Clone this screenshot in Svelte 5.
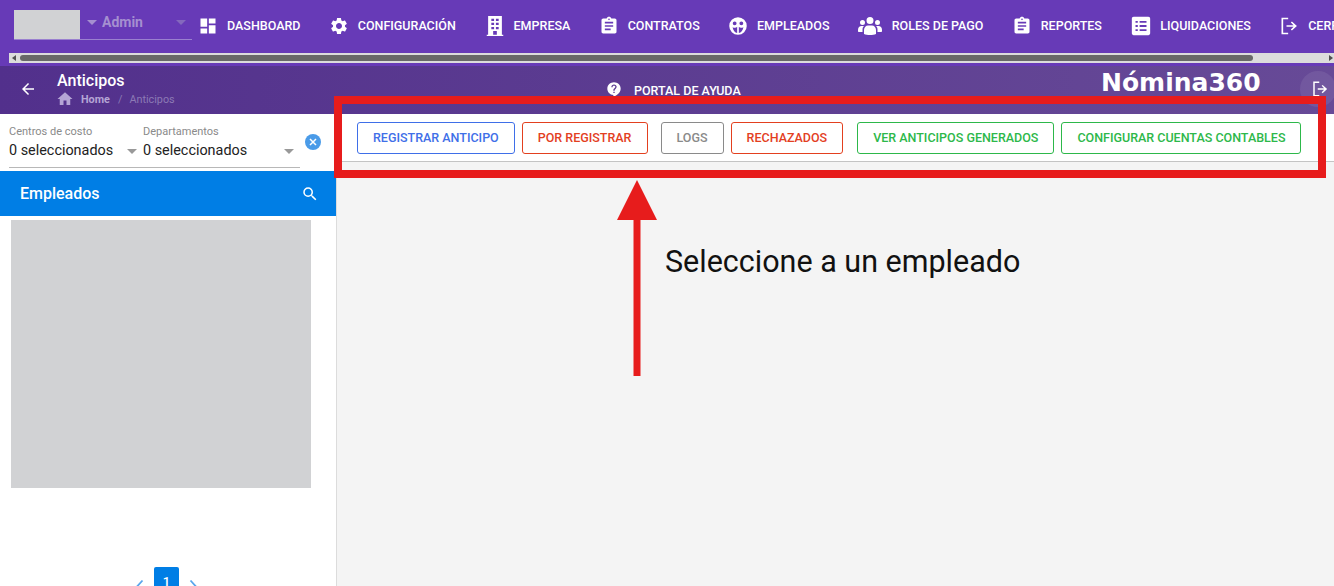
<script>
	const nav = [
		{ icon: 'dashboard', label: 'Dashboard' },
		{ icon: 'cog', label: 'Configuración' },
		{ icon: 'building', label: 'Empresa' },
		{ icon: 'clipboard', label: 'Contratos' },
		{ icon: 'face', label: 'Empleados' },
		{ icon: 'users', label: 'Roles de pago' },
		{ icon: 'clipboard', label: 'Reportes' },
		{ icon: 'list', label: 'Liquidaciones' },
		{ icon: 'exit', label: 'Cerrar sesión' }
	];

	const paths = {
		dashboard: 'M3 13h8V3H3v10zm0 8h8v-6H3v6zm10 0h8V11h-8v10zm0-18v6h8V3h-8z',
		cog: 'M19.14 12.94c.04-.3.06-.61.06-.94 0-.32-.02-.64-.07-.94l2.03-1.58c.18-.14.23-.41.12-.61l-1.92-3.32c-.12-.22-.37-.29-.59-.22l-2.39.96c-.5-.38-1.03-.7-1.62-.94l-.36-2.54c-.04-.24-.24-.41-.48-.41h-3.84c-.24 0-.43.17-.47.41l-.36 2.54c-.59.24-1.13.57-1.62.94l-2.39-.96c-.22-.08-.47 0-.59.22L2.74 8.87c-.12.21-.08.47.12.61l2.03 1.58c-.05.3-.09.63-.09.94s.02.64.07.94l-2.03 1.58c-.18.14-.23.41-.12.61l1.92 3.32c.12.22.37.29.59.22l2.39-.96c.5.38 1.03.7 1.62.94l.36 2.54c.05.24.24.41.48.41h3.84c.24 0 .44-.17.47-.41l.36-2.54c.59-.24 1.13-.56 1.62-.94l2.39.96c.22.08.47 0 .59-.22l1.92-3.32c.12-.22.07-.47-.12-.61l-2.01-1.58zM12 15.6c-1.98 0-3.6-1.62-3.6-3.6s1.62-3.6 3.6-3.6 3.6 1.62 3.6 3.6-1.62 3.6-3.6 3.6z',
		building: 'M4.500 1h15v20.500H21V23H3v-1.500h1.500V1zM8 4v2.500h3V4H8zm5 0v2.500h3V4h-3zM8 8.500V11h3V8.500H8zm5 0V11h3V8.500h-3zM8 13v2.500h3V13H8zm5 0v2.500h3V13h-3zm-3 4.500v4h4v-4h-4z',
		clipboard: 'M19 3h-4.180C14.400 1.840 13.300 1 12 1c-1.300 0-2.400.84-2.820 2H5c-1.100 0-2 .9-2 2v14c0 1.100.9 2 2 2h14c1.100 0 2-.9 2-2V5c0-1.100-.9-2-2-2zm-7 0c.55 0 1 .45 1 1s-.45 1-1 1-1-.45-1-1 .45-1 1-1zm2 14H7v-2h7v2zm3-4H7v-2h10v2zm0-4H7V7h10v2z',
		face: 'M12 1.500a10.500 10.500 0 1 0 0 21 10.500 10.500 0 0 0 0-21zM8 6.500a2.300 2.300 0 1 1 0 4.600 2.300 2.300 0 0 1 0-4.600zm8 0a2.300 2.300 0 1 1 0 4.600 2.300 2.300 0 0 1 0-4.600zM5.500 13.500c2 1 4.500 1 5.500-.5v7.500c-2.700-.4-4.800-3.400-5.500-7zm7.500 7V13c1 1.500 3.500 1.500 5.500.5-.7 3.600-2.800 6.600-5.500 7z',
		users: 'M12 3a3.500 3.500 0 1 1 0 7 3.500 3.500 0 0 1 0-7zM4.500 6a2.500 2.500 0 1 1 0 5 2.500 2.500 0 0 1 0-5zm15 0a2.500 2.500 0 1 1 0 5 2.500 2.500 0 0 1 0-5zM6 20v-4c0-2.500 2-4.500 4-4.500h4c2 0 4 2 4 4.500v4c-3 1.300-9 1.300-12 0zM0 16c0-2.500 1.500-4 3.500-4H6c-1 1-1.500 2-1.500 3.500V18H1c-.6 0-1-.4-1-1v-1zm24 0c0-2.500-1.500-4-3.500-4H18c1 1 1.500 2 1.500 3.500V18H23c.6 0 1-.4 1-1v-1z',
		list: 'M4 2h16c1.100 0 2 .9 2 2v16c0 1.100-.9 2-2 2H4c-1.100 0-2-.9-2-2V4c0-1.100.9-2 2-2zm2 4.500V8.500h2.500v-2H6zm4.500 0v2H18v-2h-7.500zM6 11v2h2.500v-2H6zm4.500 0v2H18v-2h-7.500zM6 15.500v2h2.500v-2H6zm4.500 0v2H18v-2h-7.500z',
		exit: 'M3 2h8v2H5v16h6v2H3zm12.500 4.500 6 5.500-6 5.500-1.300-1.300 3.300-3.200H9v-2h8.500l-3.300-3.200z',
		help: 'M12 2C6.500 2 2 6.200 2 11.500c0 5 4 9 9 9.400V24c4-2 11-6 11-12.500C22 6.200 17.500 2 12 2zm1 16h-2v-2h2v2zm1.600-6.500c-.9.800-1.600 1.300-1.600 3h-2c0-2.500 1-3.200 2-4 .7-.6 1.100-1 1.100-1.700 0-.9-.9-1.600-2.100-1.600s-2.100.7-2.100 2H8c0-2.300 1.800-4 4-4s4 1.500 4 3.600c0 1.200-.6 2-1.400 2.700z',
		home: 'M10 20v-6h4v6h5v-8h3L12 3 2 12h3v8z',
		search: 'M15.500 14h-.79l-.28-.27A6.470 6.470 0 0 0 16 9.500 6.500 6.500 0 1 0 9.500 16c1.610 0 3.090-.59 4.230-1.570l.27.28v.79l5 4.990L20.490 19l-4.990-5zm-6 0C7.010 14 5 11.990 5 9.500S7.010 5 9.500 5 14 7.010 14 9.500 11.990 14 9.500 14z',
		back: 'M20 11H7.830l5.590-5.590L12 4l-8 8 8 8 1.410-1.410L7.830 13H20v-2z'
	};

	const actions = [
		{ label: 'Registrar anticipo', tone: 'blue' },
		{ label: 'Por registrar', tone: 'red' },
		{ label: 'Logs', tone: 'grey' },
		{ label: 'Rechazados', tone: 'red' },
		{ label: 'Ver anticipos generados', tone: 'green wide' },
		{ label: 'Configurar cuentas contables', tone: 'green' }
	];
</script>

<div class="page">
	<header class="topnav">
		<div class="user">
			<div class="avatar"></div>
			<span class="caret lilac"></span>
			<span class="name">Admin</span>
			<span class="caret dim"></span>
		</div>
		<nav>
			{#each nav as item}
				<a class="navlink" href="#top">
					<svg viewBox="0 0 24 24" class={item.icon}><path fill-rule="evenodd" d={paths[item.icon]} /></svg>
					{item.label}
				</a>
			{/each}
		</nav>
	</header>

	<div class="scrollbar">
		<span class="arrow left"></span>
		<span class="thumb"></span>
		<span class="arrow right"></span>
	</div>

	<div class="band"></div>

	<section class="subheader">
		<button class="back" aria-label="Volver">
			<svg viewBox="0 0 24 24"><path d={paths.back} /></svg>
		</button>
		<div class="title">
			<h1>Anticipos</h1>
			<div class="crumbs">
				<svg viewBox="0 0 24 24"><path d={paths.home} /></svg>
				<b>Home</b>
				<i>/</i>
				<span>Anticipos</span>
			</div>
		</div>
		<div class="portal">
			<svg viewBox="0 0 24 24"><path fill-rule="evenodd" d={paths.help} /></svg>
			Portal de ayuda
		</div>
		<div class="brand">Nómina360</div>
		<div class="logout">
			<svg viewBox="0 0 24 24"><path d={paths.exit} /></svg>
		</div>
	</section>

	<main>
		<aside>
			<div class="filters">
				<div class="selects">
					<div class="select first">
						<label for="cc">Centros de costo</label>
						<div id="cc" class="value">0 seleccionados <span class="caret grey"></span></div>
					</div>
					<div class="select">
						<label for="dep">Departamentos</label>
						<div id="dep" class="value">0 seleccionados <span class="caret grey"></span></div>
					</div>
				</div>
				<span class="clear">
					<svg viewBox="0 0 16 16"><path d="M5 5l6 6M11 5l-6 6" /></svg>
				</span>
			</div>
			<div class="listhead">
				Empleados
				<svg viewBox="0 0 24 24"><path d={paths.search} /></svg>
			</div>
			<div class="listbody"></div>
			<div class="pager">
				<svg class="chev" viewBox="0 0 8 14"><path d="M6.500 1.500 1.500 7l5 5.500" /></svg>
				<span class="pagenum">1</span>
				<svg class="chev" viewBox="0 0 8 14"><path d="M1.500 1.500 6.500 7l-5 5.500" /></svg>
			</div>
		</aside>

		<div class="content">
			<div class="toolbar">
				{#each actions as action}
					<button class="action {action.tone}">{action.label}</button>
				{/each}
			</div>
			<p class="empty">Seleccione a un empleado</p>
		</div>
	</main>

	<!-- anotacion roja encima de la captura -->
	<div class="redbox"></div>
	<svg class="redarrow" viewBox="0 0 40 196"><path d="M20 0 40 40H23.500V196H16.500V40H0z" /></svg>
</div>

<style>
	:global(body) {
		margin: 0;
		overflow: hidden;
		background: #fff;
	}

	.page {
		position: relative;
		width: 1334px;
		height: 586px;
		overflow: hidden;
		font-family: Roboto, "Liberation Sans", sans-serif;
		background: #673ab7;
	}

	.topnav {
		display: flex;
		height: 53px;
		background: #673ab7;
		padding-left: 14px;
		overflow: hidden;
	}

	.user {
		display: flex;
		align-items: flex-start;
		flex: none;
		width: 178px;
		height: 29px;
		margin-top: 10px;
		border-bottom: 1px solid #9a80cf;
	}

	.avatar {
		width: 66px;
		height: 29px;
		background: #d1d2d4;
		flex: none;
	}

	.caret {
		width: 0;
		height: 0;
		border-left: 5px solid transparent;
		border-right: 5px solid transparent;
		border-top: 5px solid #a58fd0;
		flex: none;
	}

	.caret.lilac {
		margin: 10px 5px 0 7px;
	}

	.caret.dim {
		margin: 10px 0 0 33px;
		border-top-color: #8468bd;
	}

	.name {
		font-size: 14px;
		font-weight: 700;
		line-height: 24px;
		color: #a58fd0;
	}

	nav {
		display: flex;
		gap: 28.300px;
		margin-left: 6px;
		flex: none;
	}

	.navlink {
		display: flex;
		align-items: center;
		height: 51px;
		color: #fff;
		font-size: 12.500px;
		font-weight: 500;
		text-transform: uppercase;
		text-decoration: none;
		white-space: nowrap;
	}

	.navlink svg {
		width: 20px;
		height: 20px;
		fill: #fff;
		margin-right: 9px;
		flex: none;
	}

	.navlink svg.building {
		width: 22px;
		height: 22px;
		margin-right: 7.500px;
	}

	.navlink svg.list {
		width: 22px;
		height: 22px;
		margin-right: 8px;
	}

	.navlink svg.users {
		width: 24px;
		height: 24px;
		margin-right: 10px;
	}

	.scrollbar {
		display: flex;
		align-items: center;
		height: 10px;
		margin-left: 9px;
		background: #dcdcdc;
	}

	.thumb {
		height: 6px;
		width: 1233px;
		margin-left: 4px;
		background: #686868;
		border-radius: 3px;
	}

	.arrow {
		width: 0;
		height: 0;
		border-top: 3px solid transparent;
		border-bottom: 3px solid transparent;
	}

	.arrow.left {
		margin-left: 3px;
		border-right: 4px solid #505050;
	}

	.arrow.right {
		margin-left: auto;
		margin-right: 1px;
		border-left: 4px solid #505050;
	}

	.band {
		height: 3px;
		background: #673ab7;
	}

	.subheader {
		display: flex;
		align-items: flex-start;
		height: 48px;
		color: #fff;
		background: linear-gradient(90deg, #52308c, #674a97);
	}

	.back {
		width: 18px;
		height: 18px;
		margin: 14px 0 0 19px;
		padding: 0;
		border: 0;
		background: none;
	}

	.back svg {
		display: block;
		fill: #fff;
	}

	.title {
		margin-left: 20px;
		width: 271px;
		flex: none;
	}

	h1 {
		margin: 6px 0 0;
		font-size: 16px;
		font-weight: 500;
		line-height: 18px;
	}

	.crumbs {
		display: flex;
		align-items: center;
		margin-top: 2px;
		font-size: 10.800px;
		line-height: 16px;
		color: #8c7ab5;
	}

	.crumbs svg {
		width: 18px;
		height: 18px;
		fill: #b5a5d5;
		margin-left: -1px;
		margin-top: -3px;
	}

	.crumbs b {
		margin-left: 7px;
		color: #b5a5d5;
	}

	.crumbs i {
		margin: 0 7px 0 8px;
		font-style: normal;
	}

	.portal {
		display: flex;
		align-items: center;
		width: 495px;
		flex: none;
		margin: 15px 0 0 278px;
		font-size: 12.500px;
		font-weight: 500;
		line-height: 20px;
		text-transform: uppercase;
	}

	.portal svg {
		width: 16px;
		height: 16px;
		fill: #fff;
		margin-right: 12px;
		margin-top: -4px;
	}

	.brand {
		font-family: "DejaVu Sans", sans-serif;
		font-size: 25px;
		font-weight: 700;
		line-height: 34px;
		white-space: nowrap;
	}

	.logout {
		position: absolute;
		left: 1300px;
		top: 71px;
		width: 36px;
		height: 36px;
		border-radius: 50%;
		background: rgba(255, 255, 255, 0.08);
	}

	.logout svg {
		position: absolute;
		left: 11px;
		top: 9px;
		width: 18px;
		height: 18px;
		fill: #fff;
	}

	main {
		display: flex;
		height: 472px;
	}

	aside {
		flex: none;
		width: 336px;
		background: #fff;
		border-right: 1px solid #dcdcdc;
	}

	.filters {
		position: relative;
		height: 57px;
		padding-left: 9px;
		box-sizing: border-box;
	}

	.selects {
		display: flex;
		width: 291px;
		height: 54px;
		box-sizing: border-box;
		padding-top: 11px;
		border-bottom: 1px solid #b8b8b8;
	}

	.select {
		flex: 1;
	}

	.select.first {
		flex: none;
		width: 134px;
	}

	label {
		display: block;
		font-size: 11px;
		line-height: 13px;
		color: #8a8a8a;
	}

	.value {
		position: relative;
		font-size: 14.400px;
		line-height: 20px;
		margin-top: 3px;
		color: #222;
		white-space: nowrap;
	}

	.caret.grey {
		position: absolute;
		right: 6px;
		top: 8px;
		border-top-color: #999;
	}

	.clear {
		position: absolute;
		left: 305px;
		top: 20px;
		width: 16px;
		height: 16px;
		border-radius: 50%;
		background: #4a9be8;
	}

	.clear svg {
		display: block;
		stroke: #fff;
		stroke-width: 1.500;
		fill: none;
	}

	.listhead {
		display: flex;
		align-items: center;
		justify-content: space-between;
		height: 45px;
		padding: 0 17px 0 20px;
		background: #007ee5;
		color: #fff;
		font-size: 16px;
		font-weight: 500;
	}

	.listhead svg {
		width: 18px;
		height: 18px;
		fill: #fff;
	}

	.listbody {
		width: 300px;
		height: 268px;
		margin: 4px 0 0 11px;
		background: #d1d2d4;
	}

	.pager {
		display: flex;
		justify-content: center;
		align-items: flex-start;
		gap: 10px;
		margin-top: 79px;
		padding-right: 3px;
	}

	.pagenum {
		width: 25px;
		height: 30px;
		background: #007ee5;
		border-radius: 2px;
		color: #fff;
		font-size: 13px;
		font-weight: 500;
		line-height: 30px;
		text-align: center;
	}

	.chev {
		width: 8px;
		height: 14px;
		margin-top: 12px;
		fill: none;
		stroke: #5aa6ec;
		stroke-width: 1.800;
	}

	.content {
		flex: 1;
		background: #f4f4f4;
	}

	.toolbar {
		display: flex;
		align-items: center;
		height: 47px;
		padding-left: 20px;
		background: #fff;
		border-bottom: 1px solid #c4c4c4;
		gap: 7px;
	}

	.action {
		height: 32px;
		padding: 0 15px;
		background: #fff;
		border: 1px solid;
		border-radius: 3px;
		font-family: inherit;
		font-size: 12.500px;
		font-weight: 500;
		text-transform: uppercase;
		white-space: nowrap;
	}

	.action.grey {
		margin-left: 6px;
	}

	.action.wide {
		margin-left: 7px;
	}

	.blue { color: #3f6fe8; }
	.red { color: #e3401f; }
	.grey { color: #8a8a8a; }
	.green { color: #2db84a; }

	.empty {
		margin: 82px 0 0 328px;
		font-size: 30.500px;
		line-height: 36px;
		color: #111;
	}

	.redbox {
		position: absolute;
		left: 334px;
		top: 96px;
		width: 992px;
		height: 82px;
		box-sizing: border-box;
		border: 8px solid #e71c1c;
	}

	.redarrow {
		position: absolute;
		left: 617px;
		top: 180px;
		width: 40px;
		height: 196px;
		fill: #e71c1c;
	}
</style>
